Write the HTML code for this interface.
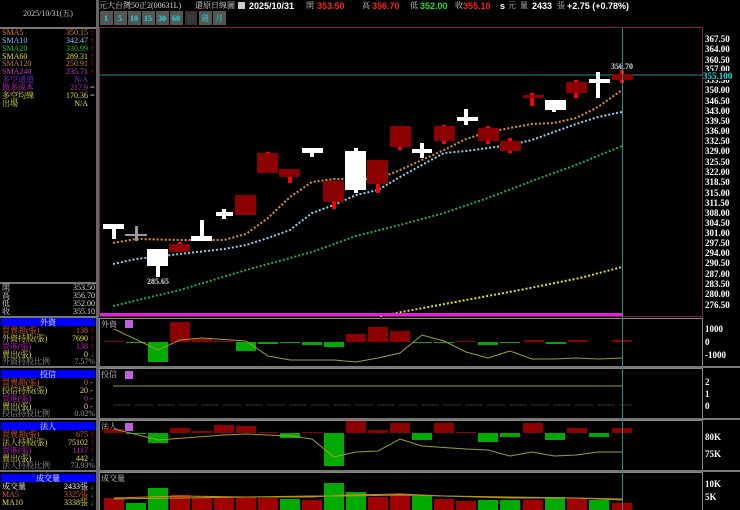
<!DOCTYPE html>
<html><head><meta charset="utf-8"><style>
html,body{margin:0;padding:0;background:#000;width:740px;height:510px;overflow:hidden}
svg{display:block}
text{font-family:"Liberation Serif","Noto Serif CJK SC","Noto Sans CJK TC",serif}
.s{font-size:8px}
.h{font-family:"Liberation Sans","Noto Sans CJK TC",sans-serif;font-weight:bold;font-size:9px}
.ax{font-size:9px;fill:#fff;font-weight:bold}
</style></head><body>
<svg width="740" height="510" viewBox="0 0 740 510" xmlns="http://www.w3.org/2000/svg">
<rect width="740" height="510" fill="#000"/>
<!-- left panel -->
<text x="48" y="16" class="s" fill="#ccc" text-anchor="middle">2025/10/31(五)</text>
<rect x="0" y="27" width="97" height="2" fill="#777"/>
<rect x="96" y="0" width="3" height="510" fill="#666"/>
<g class="s">
<text x="2" y="35" fill="#e08020">SMA5</text><text x="88" y="35" fill="#e08020" text-anchor="end">350.15</text>
<text x="2" y="43" fill="#80c0ff">SMA10</text><text x="88" y="43" fill="#80c0ff" text-anchor="end">342.47</text>
<text x="2" y="51" fill="#20c020">SMA20</text><text x="88" y="51" fill="#20c020" text-anchor="end">330.99</text>
<text x="2" y="59" fill="#e0e020">SMA60</text><text x="88" y="59" fill="#e0e020" text-anchor="end">289.31</text>
<text x="2" y="66" fill="#c08040">SMA120</text><text x="88" y="66" fill="#c08040" text-anchor="end">250.91</text>
<text x="2" y="74" fill="#c040c0">SMA240</text><text x="88" y="74" fill="#c040c0" text-anchor="end">235.71</text>
<text x="2" y="82" fill="#8030e0">多空通道</text><text x="88" y="82" fill="#8030e0" text-anchor="end">N/A</text>
<text x="2" y="90" fill="#d020d0">做多成本</text><text x="88" y="90" fill="#d020d0" text-anchor="end">217.9</text>
<text x="2" y="98" fill="#e0e040">多空均線</text><text x="88" y="98" fill="#e0e040" text-anchor="end">170.36</text>
<text x="2" y="106" fill="#e0e040">出場</text><text x="88" y="106" fill="#e0e040" text-anchor="end">N/A</text>
</g>
<g fill="#f00" font-size="8"><text x="90" y="35">↑</text><text x="90" y="43">↑</text><text x="90" y="51">↑</text><text x="90" y="59">↑</text><text x="90" y="66">↑</text><text x="90" y="74">↑</text></g>
<g fill="#ccc" font-size="8"><text x="90" y="90">=</text><text x="90" y="98">=</text></g>
<rect x="0" y="282" width="97" height="2" fill="#777"/>
<g class="s" fill="#ddd">
<text x="2" y="290">開</text><text x="95" y="290" text-anchor="end">353.50</text>
<text x="2" y="298">高</text><text x="95" y="298" text-anchor="end">356.70</text>
<text x="2" y="306">低</text><text x="95" y="306" text-anchor="end">352.00</text>
<text x="2" y="314">收</text><text x="95" y="314" text-anchor="end">355.10</text>
</g>
<!-- section blocks -->
<g class="s">
<rect x="0" y="316" width="97" height="2" fill="#777"/>
<rect x="1" y="318" width="94" height="8" fill="#0000ff"/><text x="48" y="325" fill="#fff" text-anchor="middle">外資</text>
<text x="2" y="333" fill="#e06030">買賣超(張)</text><text x="88" y="333" fill="#e06030" text-anchor="end">138</text>
<text x="2" y="341" fill="#e0e040">外資持股(張)</text><text x="88" y="341" fill="#e0e040" text-anchor="end">7690</text>
<text x="2" y="349" fill="#d020d0">買進(張)</text><text x="88" y="349" fill="#d020d0" text-anchor="end">138</text>
<text x="2" y="357" fill="#e0e040">賣出(張)</text><text x="88" y="357" fill="#e0e040" text-anchor="end">0</text>
<text x="2" y="364" fill="#999">外資持股比例</text><text x="95" y="364" fill="#999" text-anchor="end">7.57%</text>

<rect x="0" y="366" width="97" height="2" fill="#777"/>
<rect x="1" y="370" width="94" height="8" fill="#0000ff"/><text x="48" y="377" fill="#fff" text-anchor="middle">投信</text>
<text x="2" y="385" fill="#e06030">買賣超(張)</text><text x="88" y="385" fill="#e06030" text-anchor="end">0</text>
<text x="2" y="393" fill="#e0e040">投信持股(張)</text><text x="88" y="393" fill="#e0e040" text-anchor="end">20</text>
<text x="2" y="401" fill="#d020d0">買進(張)</text><text x="88" y="401" fill="#d020d0" text-anchor="end">0</text>
<text x="2" y="409" fill="#e0e040">賣出(張)</text><text x="88" y="409" fill="#e0e040" text-anchor="end">0</text>
<text x="2" y="416" fill="#999">投信持股比例</text><text x="95" y="416" fill="#999" text-anchor="end">0.02%</text>

<rect x="0" y="418" width="97" height="2" fill="#777"/>
<rect x="1" y="422" width="94" height="8" fill="#0000ff"/><text x="48" y="429" fill="#fff" text-anchor="middle">法人</text>
<text x="2" y="437" fill="#e06030">買賣超(張)</text><text x="88" y="437" fill="#e06030" text-anchor="end">675</text>
<text x="2" y="445" fill="#e0e040">法人持股(張)</text><text x="88" y="445" fill="#e0e040" text-anchor="end">75102</text>
<text x="2" y="453" fill="#d020d0">買進(張)</text><text x="88" y="453" fill="#d020d0" text-anchor="end">1117</text>
<text x="2" y="461" fill="#e0e040">賣出(張)</text><text x="88" y="461" fill="#e0e040" text-anchor="end">442</text>
<text x="2" y="468" fill="#999">法人持股比例</text><text x="95" y="468" fill="#999" text-anchor="end">73.93%</text>

<rect x="0" y="470" width="97" height="2" fill="#777"/>
<rect x="1" y="474" width="94" height="8" fill="#0000ff"/><text x="48" y="481" fill="#fff" text-anchor="middle">成交量</text>
<text x="2" y="489" fill="#fff">成交量</text><text x="88" y="489" fill="#fff" text-anchor="end">2433張</text>
<text x="2" y="497" fill="#e06030">MA5</text><text x="88" y="497" fill="#e06030" text-anchor="end">3325張</text>
<text x="2" y="505" fill="#e0e040">MA10</text><text x="88" y="505" fill="#e0e040" text-anchor="end">3338張</text>
</g>
<g fill="#f00" font-size="8"><text x="90" y="333">↑</text><text x="90" y="341">↑</text><text x="90" y="349">↑</text><text x="90" y="437">↑</text><text x="90" y="445">↑</text><text x="90" y="453">↑</text></g>
<g fill="#0c0" font-size="8"><text x="90" y="357">↓</text><text x="90" y="461">↓</text><text x="90" y="489">↓</text><text x="90" y="497">↓</text><text x="90" y="505">↓</text></g>
<g fill="#ccc" font-size="8"><text x="90" y="385">-</text><text x="90" y="393">-</text><text x="90" y="401">-</text><text x="90" y="409">-</text></g>

<!-- header -->
<g class="s" fill="#ddd"><text x="99" y="8">元大台灣50正2(00631L)</text><text x="195" y="8">還原日線圖</text></g>
<rect x="238" y="2" width="7" height="7" fill="#ccc"/>
<text x="249" y="9" class="h" fill="#fff">2025/10/31</text>
<text x="306" y="8" class="s" fill="#ccc">開</text><text x="317" y="9" class="h" fill="#f22">353.50</text>
<text x="362" y="8" class="s" fill="#ccc">高</text><text x="372" y="9" class="h" fill="#f22">356.70</text>
<text x="410" y="8" class="s" fill="#ccc">低</text><text x="420" y="9" class="h" fill="#2d2">352.00</text>
<text x="455" y="8" class="s" fill="#ccc">收</text><text x="463" y="9" class="h" fill="#f22">355.10</text>
<text x="500" y="9" class="h" fill="#fff">s</text><text x="508" y="8" class="s" fill="#ccc">元</text>
<text x="520" y="8" class="s" fill="#ccc">量</text><text x="532" y="9" class="h" fill="#fff">2433</text><text x="557" y="8" class="s" fill="#ccc">張</text>
<text x="567" y="9" class="h" fill="#fff">+2.75 (+0.78%)</text>
<!-- buttons -->
<g font-size="8" font-weight="bold" text-anchor="middle">
<rect x="100" y="11" width="13" height="14" fill="#555"/><text x="106" y="21" fill="#2dd">1</text>
<rect x="114" y="11" width="13" height="14" fill="#555"/><text x="120" y="21" fill="#2dd">5</text>
<rect x="128" y="11" width="13" height="14" fill="#555"/><text x="134" y="21" fill="#2dd">10</text>
<rect x="142" y="11" width="13" height="14" fill="#555"/><text x="148" y="21" fill="#2dd">15</text>
<rect x="156" y="11" width="13" height="14" fill="#555"/><text x="162" y="21" fill="#2dd">30</text>
<rect x="170" y="11" width="13" height="14" fill="#555"/><text x="176" y="21" fill="#2dd">60</text>
<rect x="185" y="11" width="12" height="14" fill="#333"/><text x="191" y="21" fill="#555" font-weight="normal">日</text>
<rect x="199" y="11" width="13" height="14" fill="#555"/><text x="205" y="21" fill="#2dd" font-weight="normal">週</text>
<rect x="213" y="11" width="13" height="14" fill="#555"/><text x="219" y="21" fill="#2dd" font-weight="normal">月</text>
</g>
<!-- main frame -->
<rect x="99.5" y="27.5" width="603" height="289" fill="none" stroke="#7a2040"/>
<line x1="99" y1="75" x2="703" y2="75" stroke="#2a8a8a"/>
<!-- axis labels -->
<g class="ax">
<text x="705" y="42">367.50</text><text x="705" y="52">364.00</text><text x="705" y="63">360.50</text><text x="705" y="72">357.00</text>
<text x="705" y="83">353.50</text><text x="705" y="93">350.00</text><text x="705" y="104">346.50</text><text x="705" y="114">343.00</text>
<text x="705" y="124">339.50</text><text x="705" y="134">336.00</text><text x="705" y="144">332.50</text><text x="705" y="154">329.00</text>
<text x="705" y="165">325.50</text><text x="705" y="175">322.00</text><text x="705" y="185">318.50</text><text x="705" y="196">315.00</text>
<text x="705" y="206">311.50</text><text x="705" y="216">308.00</text><text x="705" y="226">304.50</text><text x="705" y="236">301.00</text>
<text x="705" y="246">297.50</text><text x="705" y="256">294.00</text><text x="705" y="266">290.50</text><text x="705" y="277">287.00</text>
<text x="705" y="287">283.50</text><text x="705" y="297">280.00</text><text x="705" y="308">276.50</text>
<rect x="703" y="71" width="37" height="9" fill="#000"/><text x="703" y="79" fill="#2dd">355.100</text>
<text x="705" y="332">1000</text><text x="705" y="345">0</text><text x="705" y="358">-1000</text>
<text x="705" y="385">2</text><text x="705" y="397">1</text><text x="705" y="409">0</text>
<text x="705" y="440">80K</text><text x="705" y="457">75K</text>
<text x="705" y="487">10K</text><text x="705" y="500">5K</text>
</g>
<!-- MAs -->
<g fill="none" stroke-width="2" stroke-dasharray="2 2">
<polyline stroke="#e09030" points="113,243 136,239 180,240 224,240 246,234 268,218 290,197 312,182 334,179 378,179 400,170 422,160 444,150 466,139 488,132 510,128 532,124 554,123 576,118 598,107 622,90"/>
<polyline stroke="#90d0f0" points="113,264 136,259 180,254 224,249 246,245 268,238 290,230 312,213 334,205 356,195 378,190 400,177 422,165 444,153 466,151 488,148 510,145 532,140 554,132 576,124 598,117 622,112"/>
<polyline stroke="#20b040" points="113,306 180,290 246,270 312,252 356,236 400,225 444,213 488,198 532,181 576,165 622,146"/>
<polyline stroke="#e0e020" points="380,316 450,303 520,290 580,278 622,267"/>
</g>
<rect x="100" y="313" width="522" height="3" fill="#e020e0"/>
<!-- candles -->
<g fill="#fff">
<rect x="103" y="224" width="21" height="5"/><rect x="112" y="224" width="4" height="15"/>
<rect x="147" y="249" width="21" height="17"/><rect x="156" y="249" width="4" height="28"/>
<rect x="191" y="236" width="21" height="5"/><rect x="200" y="220" width="4" height="21"/>
<rect x="216" y="212" width="17" height="4"/><rect x="222" y="209" width="4" height="10"/>
<rect x="302" y="148" width="21" height="5"/><rect x="310" y="148" width="4" height="9"/>
<rect x="345" y="151" width="21" height="39"/><rect x="354" y="148" width="4" height="45"/>
<rect x="412" y="149" width="20" height="4"/><rect x="420" y="143" width="4" height="15"/>
<rect x="457" y="117" width="21" height="4"/><rect x="464" y="109" width="4" height="16"/>
<rect x="545" y="100" width="21" height="10"/><rect x="552" y="100" width="4" height="12"/>
<rect x="589" y="79" width="21" height="4"/><rect x="596" y="72" width="4" height="26"/>
</g>
<g fill="#999"><rect x="125" y="234" width="22" height="2"/><rect x="135" y="226" width="3" height="15"/></g>
<g fill="#f00">
<rect x="178" y="242" width="4" height="10"/><rect x="332" y="181" width="4" height="28"/><rect x="376" y="160" width="4" height="33"/>
<rect x="288" y="169" width="4" height="14"/><rect x="398" y="126" width="4" height="24"/><rect x="442" y="125" width="4" height="19"/>
<rect x="486" y="126" width="4" height="18"/><rect x="508" y="138" width="4" height="15"/><rect x="530" y="93" width="4" height="13"/>
<rect x="574" y="80" width="4" height="18"/><rect x="620" y="70" width="4" height="13"/><rect x="266" y="152" width="4" height="21"/>
</g>
<g fill="#8b0000">
<rect x="169" y="244" width="21" height="8"/><rect x="235" y="195" width="21" height="20"/><rect x="257" y="153" width="21" height="20"/>
<rect x="279" y="169" width="21" height="8"/><rect x="323" y="181" width="21" height="21"/><rect x="367" y="160" width="21" height="24"/>
<rect x="390" y="126" width="21" height="21"/><rect x="434" y="126" width="21" height="15"/><rect x="478" y="128" width="21" height="13"/>
<rect x="500" y="141" width="21" height="10"/><rect x="523" y="95" width="21" height="3"/><rect x="566" y="82" width="21" height="11"/>
<rect x="612" y="74" width="21" height="6"/>
</g>
<text x="158" y="284" font-size="8" font-weight="bold" fill="#ddd" text-anchor="middle" font-family="Liberation Sans,sans-serif">285.65</text>
<text x="622" y="69" font-size="8" font-weight="bold" fill="#ddd" text-anchor="middle" font-family="Liberation Sans,sans-serif">356.70</text>

<!-- subpanel frames -->
<g fill="none" stroke="#888"><rect x="99.5" y="318.5" width="603" height="48"/><rect x="99.5" y="368.5" width="603" height="50"/><rect x="99.5" y="420.5" width="603" height="50"/><rect x="99.5" y="472.5" width="603" height="40"/></g>
<rect x="99" y="366" width="641" height="2" fill="#777"/><rect x="99" y="418" width="641" height="2" fill="#777"/><rect x="99" y="470" width="641" height="2" fill="#777"/>
<g class="s" fill="#ccc"><text x="101" y="327">外資</text><text x="101" y="377">投信</text><text x="101" y="429">法人</text><text x="101" y="481">成交量</text></g>
<g fill="#c060e0"><rect x="125" y="320" width="8" height="8"/><rect x="125" y="371" width="8" height="8"/><rect x="125" y="423" width="8" height="8"/></g>
<!-- foreign -->
<g fill="#8b0000"><rect x="104" y="341" width="20" height="1"/><rect x="170" y="322" width="20" height="20"/><rect x="192" y="339" width="20" height="3"/><rect x="214" y="341" width="20" height="1"/><rect x="346" y="334" width="20" height="8"/><rect x="368" y="327" width="20" height="15"/><rect x="390" y="331" width="20" height="11"/><rect x="456" y="341" width="20" height="1"/><rect x="524" y="340" width="20" height="2"/><rect x="568" y="340" width="20" height="2"/><rect x="612" y="340" width="20" height="2"/></g>
<g fill="#0a0"><rect x="126" y="342" width="20" height="1"/><rect x="148" y="342" width="20" height="20"/><rect x="236" y="342" width="20" height="9"/><rect x="258" y="342" width="20" height="2"/><rect x="280" y="342" width="20" height="1"/><rect x="302" y="342" width="20" height="3"/><rect x="324" y="342" width="20" height="5"/><rect x="412" y="342" width="20" height="1"/><rect x="434" y="342" width="20" height="1"/><rect x="478" y="342" width="20" height="3"/><rect x="500" y="342" width="20" height="1"/><rect x="546" y="342" width="20" height="2"/></g>
<polyline fill="none" stroke="#a0a020" points="114,329 158,350 180,340 202,338 246,341 268,356 290,360 334,360 356,362 378,358 400,353 422,335 444,341 466,352 488,358 510,351 532,359 554,359 576,358 598,359 622,358"/>
<!-- trust -->
<line x1="113" y1="386" x2="622" y2="386" stroke="#a0a020"/>
<line x1="113" y1="405" x2="632" y2="405" stroke="#333" stroke-dasharray="18 4"/>
<!-- institutional -->
<g fill="#8b0000"><rect x="104" y="429" width="20" height="4"/><rect x="170" y="428" width="20" height="5"/><rect x="192" y="431" width="20" height="2"/><rect x="214" y="425" width="20" height="8"/><rect x="236" y="426" width="20" height="7"/><rect x="258" y="432" width="20" height="1"/><rect x="302" y="432" width="20" height="1"/><rect x="346" y="421" width="20" height="12"/><rect x="368" y="430" width="20" height="3"/><rect x="390" y="423" width="20" height="10"/><rect x="434" y="423" width="20" height="10"/><rect x="456" y="432" width="20" height="1"/><rect x="523" y="423" width="20" height="10"/><rect x="567" y="428" width="20" height="5"/><rect x="612" y="428" width="20" height="5"/></g>
<g fill="#0a0"><rect x="126" y="433" width="20" height="1"/><rect x="148" y="433" width="20" height="10"/><rect x="280" y="433" width="20" height="5"/><rect x="324" y="433" width="20" height="33"/><rect x="412" y="433" width="20" height="7"/><rect x="478" y="433" width="20" height="9"/><rect x="500" y="433" width="20" height="4"/><rect x="545" y="433" width="20" height="7"/><rect x="589" y="433" width="20" height="4"/></g>
<polyline fill="none" stroke="#a0a020" points="114,429 158,440 224,435 246,434 290,436 312,439 334,457 356,452 378,451 400,439 422,446 466,449 488,450 510,456 532,452 554,456 576,455 598,452 622,452"/>
<!-- volume -->
<g fill="#a00000"><rect x="104" y="498" width="20" height="12"/><rect x="170" y="495" width="20" height="15"/><rect x="192" y="498" width="20" height="12"/><rect x="214" y="497" width="20" height="13"/><rect x="236" y="497" width="20" height="13"/><rect x="258" y="498" width="20" height="12"/><rect x="302" y="500" width="20" height="10"/><rect x="368" y="497" width="20" height="13"/><rect x="390" y="494" width="20" height="16"/><rect x="434" y="499" width="20" height="11"/><rect x="456" y="501" width="20" height="9"/><rect x="523" y="500" width="20" height="10"/><rect x="567" y="498" width="20" height="12"/><rect x="612" y="503" width="20" height="7"/></g>
<g fill="#0a0"><rect x="126" y="503" width="20" height="7"/><rect x="148" y="488" width="20" height="22"/><rect x="280" y="499" width="20" height="11"/><rect x="324" y="483" width="20" height="27"/><rect x="346" y="492" width="20" height="18"/><rect x="412" y="496" width="20" height="14"/><rect x="478" y="500" width="20" height="10"/><rect x="500" y="500" width="20" height="10"/><rect x="545" y="497" width="20" height="13"/><rect x="589" y="500" width="20" height="10"/></g>
<polyline fill="none" stroke="#e08020" points="114,498 180,496 246,497 312,497 346,495 400,494 444,496 510,498 576,498 622,500"/>
<polyline fill="none" stroke="#a0a020" points="114,499 180,498 246,497 312,496 346,496 400,495 444,496 510,497 576,498 622,499"/>
<!-- crosshair -->
<line x1="622.5" y1="28" x2="622.5" y2="510" stroke="#2a8a8a"/>
</svg>
</body></html>
